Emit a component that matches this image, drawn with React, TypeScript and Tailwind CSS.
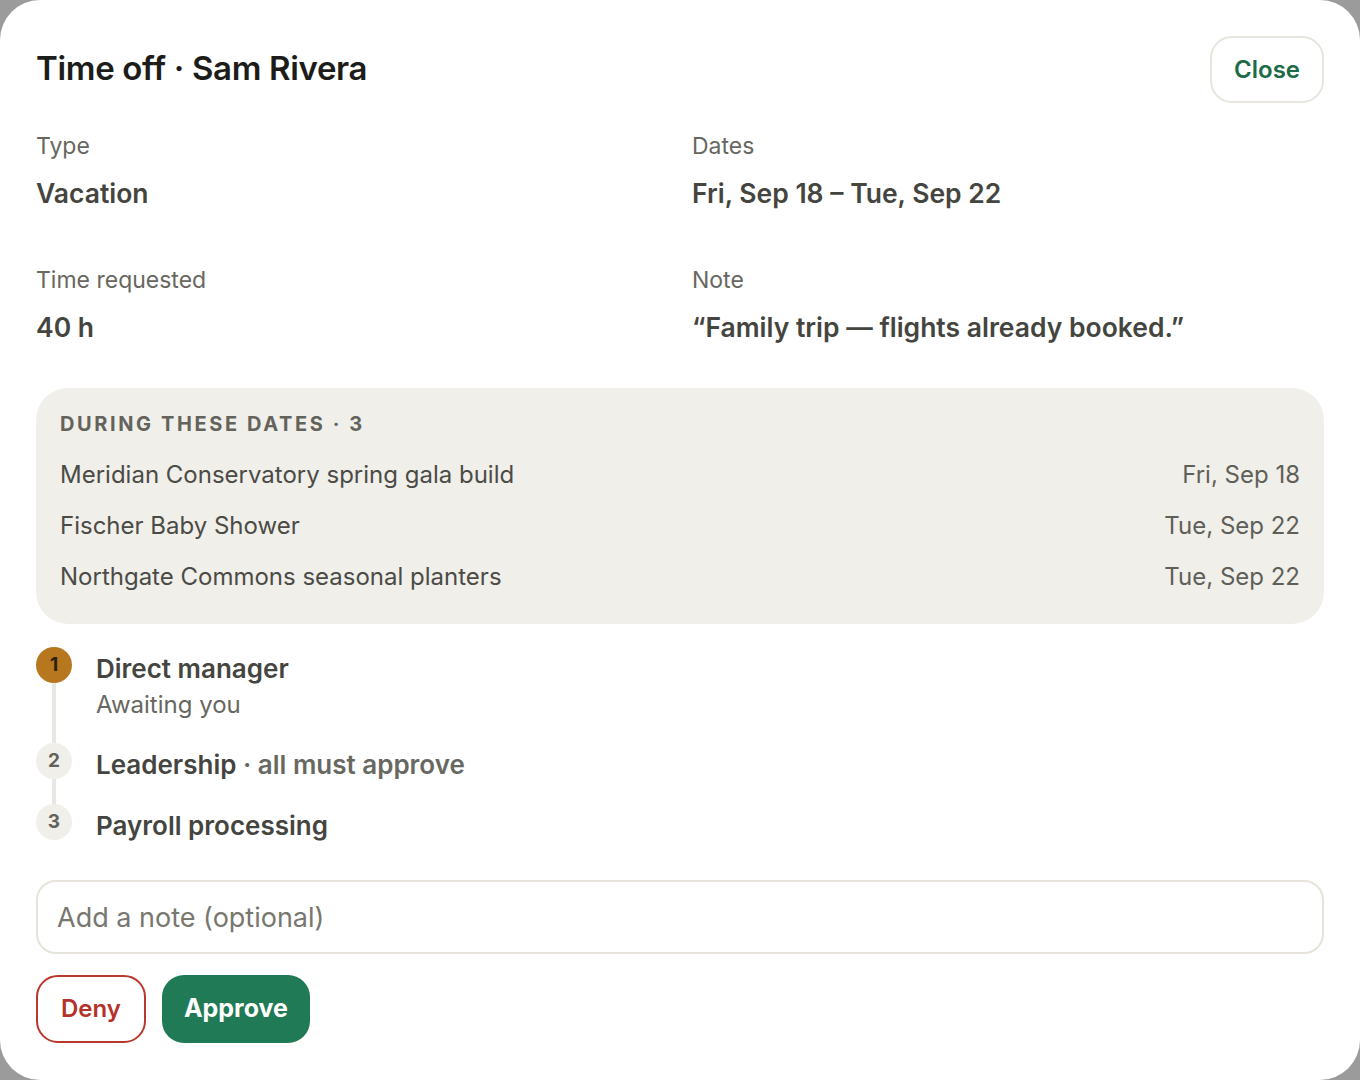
import { useState } from 'react';

type Conflict = { name: string; date: string };

const conflicts: Conflict[] = [
  { name: 'Meridian Conservatory spring gala build', date: 'Fri, Sep 18' },
  { name: 'Fischer Baby Shower', date: 'Tue, Sep 22' },
  { name: 'Northgate Commons seasonal planters', date: 'Tue, Sep 22' },
];

function Field({ label, value }: { label: string; value: string }) {
  return (
    <div className="flex flex-col gap-[17px]">
      <span className="text-[23px] leading-[28px] text-[#67675f]">{label}</span>
      <span className="text-[26.5px] leading-[32px] font-semibold text-[#45453f]">{value}</span>
    </div>
  );
}

function StepDot({ n, active }: { n: number; active?: boolean }) {
  return (
    <div
      className={
        active
          ? 'w-9 h-9 shrink-0 rounded-full bg-[#b7771f] text-[#2a2110] flex items-center justify-center text-[19px] font-bold'
          : 'w-9 h-9 shrink-0 rounded-full bg-[#f0efea] text-[#62625b] flex items-center justify-center text-[19px] font-bold'
      }
    >
      {n}
    </div>
  );
}

export default function App() {
  const [note, setNote] = useState('');

  return (
    <div className="min-h-screen bg-[#9b9b9b] font-['Inter',sans-serif]">
      <div className="w-[1360px] h-[1080px] bg-white rounded-[40px] px-9 pt-9 flex flex-col">
        <div className="flex items-start justify-between">
          <h2 className="mt-[12px] text-[33px] leading-[40px] font-semibold tracking-[-0.01em] text-[#1c1c1a]">
            Time off · Sam Rivera
          </h2>
          <button className="h-[67px] px-[22px] rounded-[22px] border-2 border-[#e7e5dd] text-[24px] font-semibold text-[#1d6a47]">
            Close
          </button>
        </div>

        <div className="mt-[29px] grid grid-cols-2 gap-x-6 gap-y-[57px]">
          <Field label="Type" value="Vacation" />
          <Field label="Dates" value="Fri, Sep 18 – Tue, Sep 22" />
          <Field label="Time requested" value="40 h" />
          <Field label="Note" value="“Family trip — flights already booked.”" />
        </div>

        <section className="mt-[45px] rounded-[32px] bg-[#f0efea] px-6 pt-[22px] pb-[32px]">
          <h3 className="text-[20px] leading-[28px] font-bold tracking-[0.13em] text-[#63635c]">
            DURING THESE DATES · 3
          </h3>
          <ul className="mt-[22px] flex flex-col gap-[21px]">
            {conflicts.map((c) => (
              <li key={c.name} className="flex justify-between text-[24px] leading-[30px] text-[#4b4b46]">
                <span>{c.name}</span>
                <span className="text-[#5f5f59]">{c.date}</span>
              </li>
            ))}
          </ul>
        </section>

        <ol className="mt-[23px] flex flex-col">
          <li className="flex gap-6">
            <div className="flex flex-col items-center w-9">
              <StepDot n={1} active />
              <div className="w-[4px] flex-1 bg-[#e8e7e2]" />
            </div>
            <div className="pt-[6px] pb-[22px] flex flex-col gap-[4px]">
              <span className="text-[26px] leading-[32px] font-semibold text-[#45453f]">Direct manager</span>
              <span className="text-[24px] leading-[32px] text-[#67675f]">Awaiting you</span>
            </div>
          </li>
          <li className="flex gap-6">
            <div className="flex flex-col items-center w-9">
              <StepDot n={2} />
              <div className="w-[4px] flex-1 bg-[#e8e7e2]" />
            </div>
            <div className="pt-[6px] pb-[23px]">
              <span className="text-[26px] leading-[32px] font-semibold text-[#45453f]">
                Leadership<span className="text-[#686862]"> · all must approve</span>
              </span>
            </div>
          </li>
          <li className="flex gap-6">
            <div className="flex flex-col items-center w-9">
              <StepDot n={3} />
            </div>
            <div className="pt-[6px]">
              <span className="text-[26px] leading-[32px] font-semibold text-[#45453f]">Payroll processing</span>
            </div>
          </li>
        </ol>

        <input
          value={note}
          onChange={(e) => setNote(e.target.value)}
          placeholder="Add a note (optional)"
          className="mt-[38px] h-[74px] w-full rounded-[20px] border-2 border-[#e6e4da] px-[19px] text-[27px] text-[#333] placeholder:text-[#77776f] outline-none"
        />

        <div className="mt-[21px] flex gap-4">
          <button className="h-[68px] px-[23px] rounded-[22px] border-2 border-[#b9372c] text-[24px] font-semibold text-[#b3322a]">
            Deny
          </button>
          <button className="h-[68px] px-[22px] rounded-[22px] bg-[#1f7a55] text-[25px] font-bold text-white">
            Approve
          </button>
        </div>
      </div>
    </div>
  );
}
